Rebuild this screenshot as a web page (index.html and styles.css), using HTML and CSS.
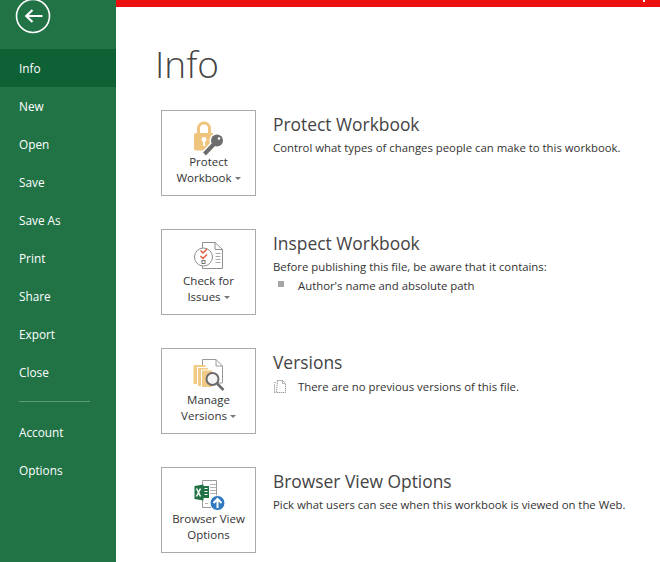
FILE: index.html
```html
<!DOCTYPE html>
<html lang="en">
<head>
<meta charset="utf-8">
<title>Info</title>
<link rel="stylesheet" href="styles.css">
</head>
<body>
<div class="app">
  <nav class="side">
    <div class="back">
      <svg width="36" height="36" viewBox="0 0 36 36"><circle cx="18" cy="16" r="16.500" fill="none" stroke="#fff" stroke-width="1.600"/><path d="M27.500 16H11.500M17.500 10l-6.200 6 6.200 6" fill="none" stroke="#fff" stroke-width="2.200"/></svg>
    </div>
    <a class="item active">Info</a>
    <a class="item">New</a>
    <a class="item">Open</a>
    <a class="item">Save</a>
    <a class="item">Save As</a>
    <a class="item">Print</a>
    <a class="item">Share</a>
    <a class="item">Export</a>
    <a class="item">Close</a>
    <div class="rule"></div>
    <a class="item">Account</a>
    <a class="item">Options</a>
  </nav>
  <main class="main">
    <div class="redbar"><i class="speck"></i></div>
    <div class="content">
      <h1 class="title">Info</h1>
      <section class="row">
        <div class="btn">
          <svg class="ico" width="34" height="32" viewBox="0 0 34 32">
            <path d="M6.500 14V8.500a5.500 5.500 0 0 1 11 0V14" fill="none" stroke="#efc47d" stroke-width="3"/>
            <rect x="2" y="13" width="20" height="17.500" rx="2" fill="#efc47d"/>
            <circle cx="12" cy="19.500" r="2.400" fill="#fff"/><rect x="11" y="20" width="2" height="6" fill="#fff"/>
            <path d="M12 34.500L24 22" stroke="#fff" stroke-width="7"/>
            <circle cx="25" cy="20.500" r="7.500" fill="#fff"/>
            <path d="M12.500 34L23 23" stroke="#6d6d6d" stroke-width="4"/>
            <circle cx="25" cy="20.500" r="6" fill="#6d6d6d"/>
            <circle cx="27" cy="18.500" r="1.300" fill="#fff"/>
          </svg>
          <span class="lbl">Protect<br>Workbook<i class="caret"></i></span>
        </div>
        <div class="text">
          <h2>Protect Workbook</h2>
          <p>Control what types of changes people can make to this workbook.</p>
        </div>
      </section>
      <section class="row">
        <div class="btn">
          <svg class="ico" width="30" height="32" viewBox="0 0 30 32">
            <path d="M8.500 3.500H21l7.500 7V29.500H8.500z" fill="#fff" stroke="#8f8f8f"/>
            <path d="M21 3.500V10.500H28.500" fill="none" stroke="#8f8f8f"/>
            <path d="M21.500 14.500h5M21.500 17.500h5M21.500 20.500h5M21.500 23.500h5" stroke="#a8a8a8"/>
            <circle cx="9.500" cy="18" r="9" fill="#fff" stroke="#8f8f8f"/>
            <path d="M6.500 11.500l2.500 2.500 4-4M6.500 17l2.500 2.500 4-4" fill="none" stroke="#e2603d" stroke-width="1.500"/>
            <rect x="8" y="21.500" width="3" height="3" fill="#fff" stroke="#777"/>
          </svg>
          <span class="lbl">Check for<br>Issues<i class="caret"></i></span>
        </div>
        <div class="text">
          <h2>Inspect Workbook</h2>
          <p>Before publishing this file, be aware that it contains:</p>
          <p class="note"><i class="sq"></i>Author's name and absolute path</p>
        </div>
      </section>
      <section class="row">
        <div class="btn">
          <svg class="ico" width="32" height="32" viewBox="0 0 32 32">
            <path d="M9.500 1.500H23l6.500 6.500V25H9.500z" fill="#fff" stroke="#9a9a9a"/>
            <path d="M23 1.500V8H29.500" fill="none" stroke="#9a9a9a"/>
            <rect x=".5" y="7" width="12" height="19" fill="#f1cb85"/>
            <rect x="4.500" y="9.500" width="11" height="19" fill="#f1cb85" stroke="#fff"/>
            <rect x="8.500" y="12" width="11" height="17.500" fill="#f1cb85" stroke="#fff"/>
            <circle cx="19.500" cy="21" r="6" fill="#f4f4f4" stroke="#6a6a6a" stroke-width="2"/>
            <path d="M24 25.500L30.500 32" stroke="#6a6a6a" stroke-width="2.500"/>
          </svg>
          <span class="lbl">Manage<br>Versions<i class="caret"></i></span>
        </div>
        <div class="text">
          <h2>Versions</h2>
          <p class="note ver">
            <svg class="docico" width="15" height="15" viewBox="0 0 15 15"><path d="M1.500 3.500h1M4.500 1.500h5l3 3v9h-9zM9.500 1.500v3h3M1.500 5.500v8h2" fill="none" stroke="#777" stroke-dasharray="1 1"/></svg>There are no previous versions of this file.
          </p>
        </div>
      </section>
      <section class="row">
        <div class="btn">
          <svg class="ico" width="34" height="32" viewBox="0 0 34 32">
            <path d="M10.500 3.500H24.500V30.500H10.500z" fill="#fff" stroke="#9a9a9a"/>
            <path d="M18 7.500h6M18 10.500h6M18 13.500h6M18 16.500h6M13 26.500h3" stroke="#b5b5b5"/>
            <path d="M2.500 9l9-1.500v16l-9-1.500z" fill="#217346"/>
            <rect x="11" y="9" width="6" height="12" fill="#217346"/>
            <path d="M12.500 11.500h3M12.500 14.500h3M12.500 17.500h3" stroke="#fff"/>
            <path d="M4.500 11.500l4 8M8.500 11.500l-4 8" stroke="#fff" stroke-width="1.500"/>
            <circle cx="25.500" cy="26" r="7.500" fill="#3079c0" stroke="#fff" stroke-width="1"/>
            <path d="M25.500 31v-8.500M21.500 26l4-4 4 4" fill="none" stroke="#fff" stroke-width="2"/>
          </svg>
          <span class="lbl">Browser View<br>Options</span>
        </div>
        <div class="text">
          <h2>Browser View Options</h2>
          <p>Pick what users can see when this workbook is viewed on the Web.</p>
        </div>
      </section>
    </div>
  </main>
</div>
</body>
</html>
```
FILE: styles.css
```css
* { box-sizing: border-box; }
html, body { margin: 0; height: 100%; overflow: hidden; background: #fff; }
body { font-family: "Open Sans", "Liberation Sans", sans-serif; color: #444; }
.app { display: flex; width: 660px; height: 562px; overflow: hidden; }
.side { width: 116px; flex: none; background: #217346; color: #fff; }
.back { height: 49px; padding-left: 15px; overflow: hidden; }
.back svg { display: block; }
.item { display: block; height: 38px; line-height: 39px; padding-left: 19px; font-size: 11.800px; color: #fff; }
.item.active { background: #0e6134; }
.rule { height: 1px; width: 71px; margin: 10px 0 11px 19px; background: #5d9a78; }
.main { flex: 1; min-width: 0; display: flex; flex-direction: column; }
.redbar { height: 7px; background: #ec1010; flex: none; position: relative; }
.speck { position: absolute; right: 15px; top: 0; width: 2px; height: 2px; background: #fff; }
.content { padding: 0 0 0 45px; }
.title { margin: 31px 0 20px -6px; font-size: 37px; line-height: 52px; font-weight: 300; color: #444; }
.row { display: flex; height: 119px; }
.btn { width: 95px; height: 86px; flex: none; border: 1px solid #ababab; background: #fff; display: flex; flex-direction: column; align-items: center; padding-top: 9px; }
.ico { display: block; flex: none; overflow: visible; }
.lbl { display: block; margin-top: 2px; font-size: 11.500px; line-height: 16px; text-align: center; color: #333; white-space: nowrap; }
.caret { display: inline-block; width: 0; height: 0; margin-left: 3px; vertical-align: 2px; border-left: 3px solid transparent; border-right: 3px solid transparent; border-top: 3px solid #777; }
.text { margin-left: 17px; min-width: 0; }
.text h2 { margin: 2px 0 0; font-size: 17.400px; line-height: 24px; font-weight: 400; color: #444; white-space: nowrap; }
.text p { margin: 3px 0 0; font-size: 11.350px; line-height: 17px; color: #333; white-space: nowrap; }
.text .note { margin-top: 2px; padding-left: 25px; position: relative; }
.text .ver { margin-top: 4px; }
.sq { position: absolute; left: 5px; top: 4px; width: 6px; height: 6px; background: #a6a6a6; }
.docico { position: absolute; left: 0; top: 1px; }
```
